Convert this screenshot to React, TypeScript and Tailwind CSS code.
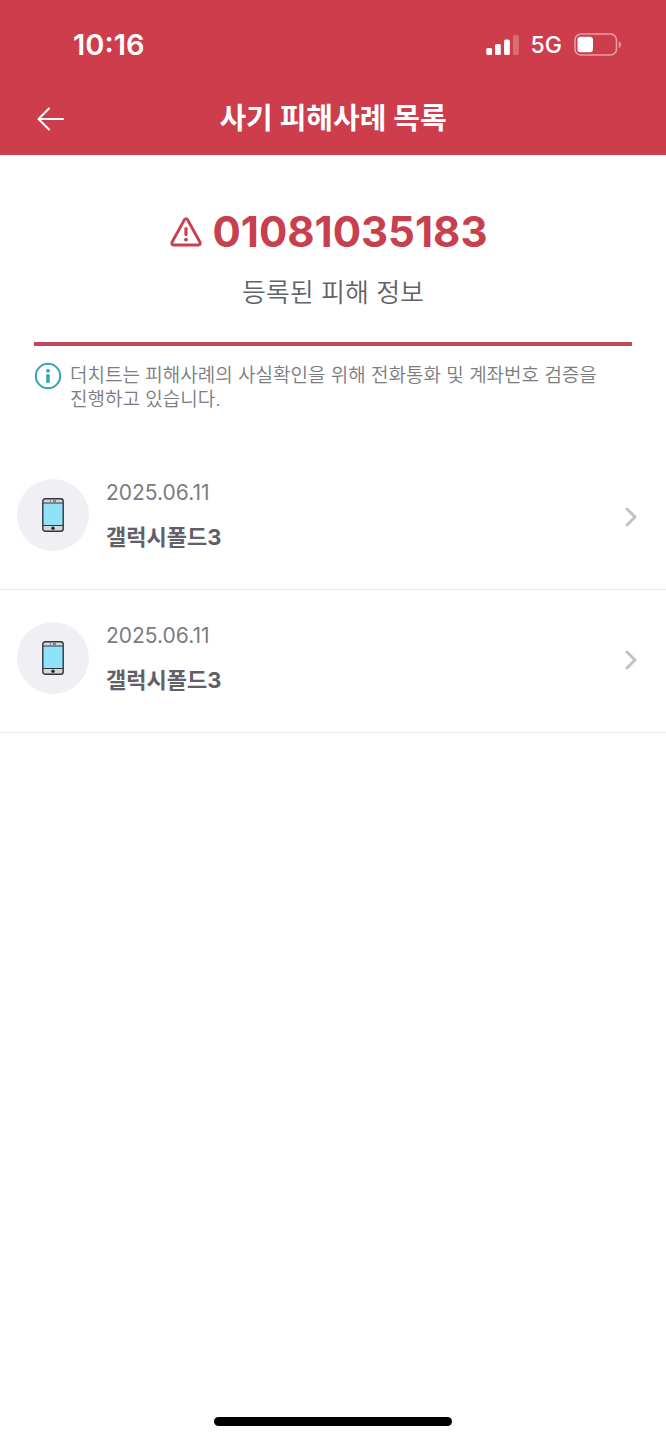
import React from "react";

type Report = { id: number; date: string; title: string };

const reports: Report[] = [
  { id: 1, date: "2025.06.11", title: "갤럭시폴드3" },
  { id: 2, date: "2025.06.11", title: "갤럭시폴드3" },
];

function SignalIcon() {
  return (
    <svg width="33" height="20" viewBox="0 0 33 20" fill="#fff" aria-hidden="true">
      <rect x="0.3" y="13" width="5.8" height="7" rx="1.6" />
      <rect x="9" y="9" width="5.8" height="11" rx="1.6" />
      <rect x="18" y="4.5" width="5.8" height="15.5" rx="1.6" />
      <rect x="27" y="0" width="5.8" height="20" rx="1.6" opacity="0.25" />
    </svg>
  );
}

function BatteryIcon() {
  return (
    <svg width="48" height="24" viewBox="0 0 48 24" fill="none" aria-hidden="true">
      <rect x="1" y="1" width="41.5" height="21" rx="6" stroke="#fff" strokeOpacity="0.5" strokeWidth="1.6" />
      <path d="M44.8 8.5c3 1 3 5.5 0 6.5z" fill="#fff" fillOpacity="0.5" />
      <rect x="3.5" y="3.8" width="15.5" height="15.5" rx="3.2" fill="#fff" />
    </svg>
  );
}

function BackIcon() {
  return (
    <svg width="28" height="26" viewBox="0 0 28 26" fill="none" stroke="#fff" strokeWidth="2" strokeLinecap="round" strokeLinejoin="round" aria-hidden="true">
      <path d="M27 13H2.5M13 2.5L2.5 13L13 23.5" />
    </svg>
  );
}

function WarningIcon() {
  return (
    <svg width="32" height="30" viewBox="0 0 32 30" fill="none" stroke="#c83f4e" strokeLinecap="round" strokeLinejoin="round" aria-hidden="true">
      <path d="M14.5 2.6Q16 0.7 17.5 2.6L30 25.2Q30.8 27.8 28.3 28H3.7Q1.2 27.8 2 25.2Z" strokeWidth="2.9" />
      <path d="M16 11.5V17.5" strokeWidth="3.2" />
      <circle cx="16" cy="22.7" r="1.9" fill="#c83f4e" stroke="none" />
    </svg>
  );
}

function InfoIcon() {
  return (
    <svg className="shrink-0" width="28" height="28" viewBox="0 0 28 28" fill="none" aria-hidden="true">
      <circle cx="14" cy="14" r="12.2" stroke="#36a3b0" strokeWidth="2" />
      <circle cx="14" cy="8.8" r="1.9" fill="#36a3b0" />
      <path d="M12.2 12.2h3.5v8.6h-3.5z" fill="#36a3b0" />
    </svg>
  );
}

function PhoneIcon() {
  return (
    <svg width="22" height="34" viewBox="0 0 22 34" fill="none" aria-hidden="true">
      <rect x="0.8" y="0.8" width="20.4" height="32.4" rx="2.5" fill="#d5d6d8" />
      <rect x="1" y="5" width="20" height="22.5" fill="#8fe2f8" />
      <path d="M1 5h20M1 27.5h20" stroke="#30363c" strokeWidth="1" />
      <path d="M8 3h1M11 3h3" stroke="#30363c" strokeWidth="1.2" />
      <circle cx="11" cy="30.2" r="1.7" fill="#252a2e" />
      <rect x="0.8" y="0.8" width="20.4" height="32.4" rx="2.5" stroke="#30363c" strokeWidth="1.4" />
    </svg>
  );
}

function ChevronIcon() {
  return (
    <svg width="14" height="24" viewBox="0 0 14 24" fill="none" stroke="#c2c2c4" strokeWidth="3" strokeLinecap="round" strokeLinejoin="round" aria-hidden="true">
      <path d="M3 6L11 14L3 22" />
    </svg>
  );
}

function ReportRow({ report }: { report: Report }) {
  return (
    <li className="border-b border-[#e8e9ed]">
      <a href={`#report-${report.id}`} className="flex items-center pt-[30px] pr-7 pb-9 pl-[17px]">
        <span className="flex size-[72px] shrink-0 items-center justify-center rounded-full bg-[#f0eff4]">
          <PhoneIcon />
        </span>
        <span className="flex flex-1 flex-col gap-3 pl-[17px]">
          <span className="text-[21px] leading-8 text-[#7b7c82]">{report.date}</span>
          <span className="text-[22px] leading-8 font-bold text-[#606167]">{report.title}</span>
        </span>
        <ChevronIcon />
      </a>
    </li>
  );
}

export default function App() {
  return (
    <div className="flex min-h-screen flex-col bg-white font-['Inter','Noto_Sans_CJK_KR',sans-serif]">
      <header className="bg-[#cd3d4b] text-white">
        <div className="flex h-[82px] items-center justify-between pt-2 pr-11 pl-[73px]">
          <time className="text-[29px] font-semibold">10:16</time>
          <div className="flex items-center gap-3">
            <SignalIcon />
            <span className="text-[23px] font-medium">5G</span>
            <BatteryIcon />
          </div>
        </div>
        <div className="grid h-[73px] grid-cols-[64px_1fr_64px] items-center px-9">
          <button type="button" aria-label="뒤로" className="flex items-center">
            <BackIcon />
          </button>
          <h1 className="text-center text-[29px] font-bold">사기 피해사례 목록</h1>
        </div>
      </header>

      <main className="flex-1">
        <section className="px-[34px]">
          <div className="flex flex-col items-center border-b-4 border-[#c2485a] pt-[52px] pb-[29px]">
            <div className="flex items-center gap-[10px] pr-2">
              <WarningIcon />
              <h2 className="text-[42px] leading-[50px] font-bold text-[#c83f4e]">01081035183</h2>
            </div>
            <p className="pt-4 text-[26px] leading-10 font-[350] text-[#626369]">등록된 피해 정보</p>
          </div>
          <div className="flex gap-2 pt-4">
            <InfoIcon />
            <p className="pt-[2px] text-[19px] leading-6 font-[350] break-keep text-[#7b7c82]">
              더치트는 피해사례의 사실확인을 위해 전화통화 및 계좌번호 검증을 진행하고 있습니다.
            </p>
          </div>
        </section>

        <ul className="pt-[35px]">
          {reports.map((report) => (
            <ReportRow key={report.id} report={report} />
          ))}
        </ul>
      </main>

      <footer className="flex justify-center pb-[14px]">
        <div className="h-[9px] w-[238px] rounded-full bg-black" />
      </footer>
    </div>
  );
}
